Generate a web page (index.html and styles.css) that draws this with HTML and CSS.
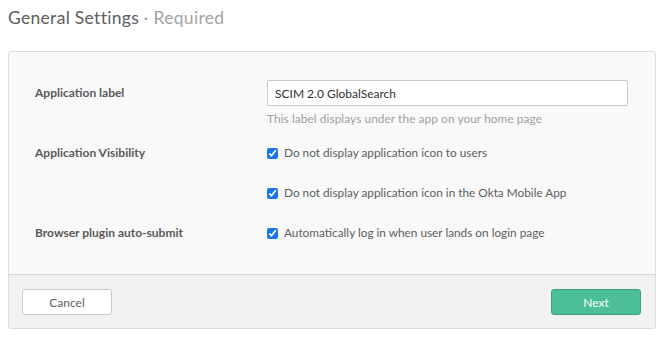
FILE: index.html
```html
<!DOCTYPE html>
<html>
<head>
    <link rel="stylesheet" href="styles.css">
</head>
<body>
    <div class="settings-wrapper">
        <h1 class="settings-title">General Settings <span class="settings-title-sub">· Required</span></h1>

        <div class="settings-panel">
            <div class="settings-body">
                <div class="settings-row">
                    <div class="settings-label">Application label</div>
                    <div class="settings-control">
                        <input type="text" class="settings-input" value="SCIM 2.0 GlobalSearch">
                        <p class="settings-help">This label displays under the app on your home page</p>
                    </div>
                </div>

                <div class="settings-row settings-row-visibility">
                    <div class="settings-label">Application Visibility</div>
                    <div class="settings-control settings-checks">
                        <label class="settings-check"><input type="checkbox" checked> Do not display application icon to users</label>
                        <label class="settings-check"><input type="checkbox" checked> Do not display application icon in the Okta Mobile App</label>
                    </div>
                </div>

                <div class="settings-row settings-row-plugin">
                    <div class="settings-label">Browser plugin auto-submit</div>
                    <div class="settings-control settings-checks">
                        <label class="settings-check"><input type="checkbox" checked> Automatically log in when user lands on login page</label>
                    </div>
                </div>
            </div>

            <div class="settings-footer">
                <button class="settings-button settings-cancel">Cancel</button>
                <button class="settings-button settings-next">Next</button>
            </div>
        </div>
    </div>
</body>
</html>
```

FILE: styles.css
```css
* {
    margin: 0;
    padding: 0;
    box-sizing: border-box;
}

body {
    font-family: Lato, "Liberation Sans", sans-serif;
    background-color: #fff;
    color: #5e5e5e;
}

.settings-wrapper {
    padding: 8px 9px 0 8px;
}

.settings-title {
    font-size: 17.5px;
    font-weight: normal;
    letter-spacing: 0.3px;
    line-height: 20px;
    color: #5d5d5d;
    margin-bottom: 23px;
}

.settings-title-sub {
    color: #a3a3a3;
}

.settings-panel {
    border: 1px solid #dcdcdc;
    border-radius: 3px;
    background-color: #f9f9f9;
    box-shadow: 0 1px 1px rgba(0, 0, 0, 0.04);
}

.settings-body {
    padding: 28px 27px 31px 26px;
}

.settings-row {
    display: grid;
    grid-template-columns: 232px 1fr;
    align-items: start;
}

.settings-row-visibility {
    margin-top: 17px;
}

.settings-row-plugin {
    margin-top: 20px;
}

.settings-label {
    font-size: 12px;
    font-weight: bold;
    color: #5a5a5a;
    line-height: 20px;
}

.settings-row:first-child .settings-label {
    line-height: 26px;
}

.settings-input {
    display: block;
    width: 100%;
    height: 26px;
    border: 1px solid #c8c8c8;
    border-radius: 2px;
    background: #fff;
    padding: 0 7px;
    font-family: inherit;
    font-size: 12px;
    color: #333;
}

.settings-help {
    margin-top: 6px;
    font-size: 11.8px;
    letter-spacing: 0.1px;
    line-height: 14px;
    color: #a0a0a0;
}

.settings-checks {
    display: flex;
    flex-direction: column;
    gap: 20px;
}

.settings-check {
    display: flex;
    align-items: center;
    gap: 6px;
    font-size: 11.8px;
    line-height: 20px;
    color: #5e5e5e;
}

.settings-check input {
    width: 11px;
    height: 11px;
    margin: 0;
    accent-color: #1a73e8;
}

.settings-footer {
    display: flex;
    justify-content: space-between;
    border-top: 1px solid #d6d6d6;
    background-color: #f2f2f2;
    padding: 14px 14px 13px 13px;
    border-radius: 0 0 3px 3px;
}

.settings-button {
    width: 90px;
    height: 26px;
    border-radius: 3px;
    font-family: Lato, sans-serif;
    font-size: 12px;
    cursor: pointer;
}

.settings-cancel {
    background: #fff;
    border: 1px solid #c9c9c9;
    color: #5e5e5e;
}

.settings-next {
    background: #4cbe99;
    border: 1px solid #3b9f7f;
    color: #fff;
}
```
